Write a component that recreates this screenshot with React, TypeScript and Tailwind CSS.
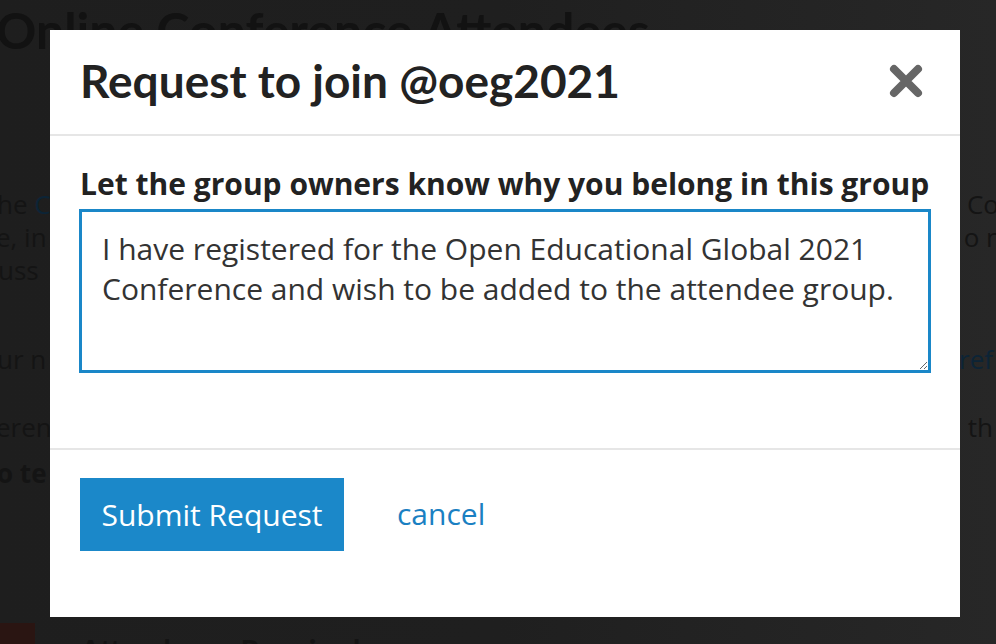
import React from "react";

const lato = "font-['Lato',sans-serif]";
const openSans = "font-['Open_Sans',sans-serif]";

function BackdropPage() {
  return (
    <div className={`flex h-full flex-col ${openSans} text-[26px] text-[#141414]`}>
      <h1 className={`${lato} ml-[-4px] mt-[0px] text-[50px] font-bold leading-[60px] text-[#121212]`}>
        Online Conference Attendees
      </h1>
      <div className="mt-[128px] flex flex-col leading-[33px]">
        <div className="flex justify-between">
          <span className="ml-[-3px]">
            he <span className="text-[#0c2436]">C</span>
          </span>
          <span className="mr-[-3px]">Co</span>
        </div>
        <div className="flex justify-between">
          <span className="ml-[-4px]">e, in</span>
          <span className="mr-[-6px]">o n</span>
        </div>
        <div className="flex justify-between">
          <span className="ml-[-2px]">uss</span>
        </div>
        <div className="mt-[56px] flex justify-between">
          <span className="ml-[-3px]">ur n</span>
          <span className="mr-[3px] text-[#0c2436]">ref</span>
        </div>
        <div className="mt-[35px] flex justify-between">
          <span className="ml-[-4px]">eren</span>
          <span className="mr-[3px]">th</span>
        </div>
        <div className="mt-[13px] flex">
          <span className="ml-[-3px] font-bold">o te</span>
        </div>
      </div>
      <div className="mt-auto flex h-[21px] items-start gap-[45px]">
        <div className="h-[21px] w-[35px] bg-[#2a1512]" />
        <span className={`${lato} mt-[12px] text-[30px] font-bold leading-none text-[#141414]`}>
          Attendance Required
        </span>
      </div>
    </div>
  );
}

function CloseIcon() {
  return (
    <svg width="34" height="34" viewBox="0 0 34 34" aria-hidden="true">
      <path d="M5 5 L29 29 M29 5 L5 29" stroke="#666666" strokeWidth="8" strokeLinecap="round" />
    </svg>
  );
}

function JoinModal() {
  return (
    <div className="flex h-[587px] w-[910px] flex-col bg-white">
      <div className="flex h-[106px] items-center justify-between border-b-2 border-[#e6e6e6] pl-[30px] pr-[37px]">
        <h2 className={`${lato} mt-[-2px] text-[46px] font-bold leading-none text-[#222222]`}>
          Request to join @oeg2021
        </h2>
        <button type="button" className="mt-[-2px]">
          <CloseIcon />
        </button>
      </div>

      <div className="flex h-[312px] flex-col px-[29px] pt-[30px]">
        <label className={`${openSans} ml-[1px] text-[30px] font-bold leading-[36px] text-[#222222]`}>
          Let the group owners know why you belong in this group
        </label>
        <textarea
          defaultValue="I have registered for the Open Educational Global 2021 Conference and wish to be added to the attendee group."
          className={`${openSans} mt-[7px] h-[164px] w-[852px] resize-y border-[3px] border-[#1a87c8] px-[20px] pt-[17px] text-[30px] leading-[40px] text-[#333333] outline-none`}
        />
      </div>

      <div className="flex items-start gap-[53px] border-t-2 border-[#e6e6e6] px-[30px] pt-[28px]">
        <button
          type="button"
          className={`${openSans} h-[73px] w-[264px] bg-[#1b88c9] text-[30px] text-white`}
        >
          Submit Request
        </button>
        <a className={`${openSans} mt-[17px] text-[30px] leading-[38px] text-[#1a80c2]`} href="#">
          cancel
        </a>
      </div>
    </div>
  );
}

export default function App() {
  return (
    <div className="relative h-[644px] w-full overflow-hidden bg-gradient-to-r from-[#1e1e1e] via-[#1f1f1f] to-[#272727]">
      <BackdropPage />
      <div className="absolute left-[50px] top-[30px]">
        <JoinModal />
      </div>
    </div>
  );
}
